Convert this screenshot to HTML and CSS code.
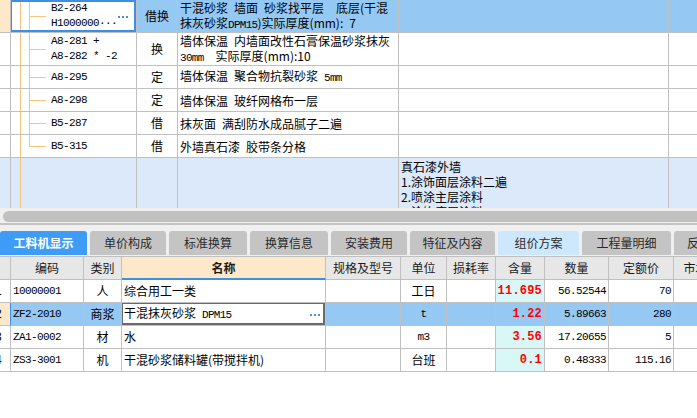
FILE: index.html
```html
<!DOCTYPE html>
<html lang="zh">
<head>
<meta charset="utf-8">
<title>工料机显示</title>
<link rel="stylesheet" href="styles.css">
</head>
<body>
<div class="app">
  <div class="top">
    <div class="tgrid">
      <div class="row sel">
        <div class="c rh-sel"></div>
        <div class="c tree cur">
          <div class="code two">B2-264<br>H1000000···</div>
          <svg class="dots dots-top" width="10" height="2" viewBox="0 0 10 2"><rect x="0" y="0" width="2" height="2"/><rect x="4" y="0" width="2" height="2"/><rect x="8" y="0" width="2" height="2"/></svg>
        </div>
        <div class="c ctr">借换</div>
        <div class="c txt"><div>干混砂浆&ensp;墙面&ensp;砂浆找平层&ensp;&ensp;底层(干混<br>抹灰砂浆<span class="mono">DPM15</span>)实际厚度(mm):&ensp;7</div></div>
        <div class="c"></div>
        <div class="c"></div>
      </div>
      <div class="row">
        <div class="c"></div>
        <div class="c tree"><div class="code two">A8-281 +<br>A8-282 * -2</div></div>
        <div class="c ctr">换</div>
        <div class="c txt"><div>墙体保温&ensp;内墙面改性石膏保温砂浆抹灰<br><span class="mono">30mm</span>&ensp;&ensp;实际厚度(mm):10</div></div>
        <div class="c"></div>
        <div class="c"></div>
      </div>
      <div class="row">
        <div class="c"></div>
        <div class="c tree"><div class="code">A8-295</div></div>
        <div class="c ctr">定</div>
        <div class="c txt"><div>墙体保温&ensp;聚合物抗裂砂浆&ensp;<span class="mono">5mm</span></div></div>
        <div class="c"></div>
        <div class="c"></div>
      </div>
      <div class="row">
        <div class="c"></div>
        <div class="c tree"><div class="code">A8-298</div></div>
        <div class="c ctr">定</div>
        <div class="c txt"><div>墙体保温&ensp;玻纤网格布一层</div></div>
        <div class="c"></div>
        <div class="c"></div>
      </div>
      <div class="row">
        <div class="c"></div>
        <div class="c tree"><div class="code">B5-287</div></div>
        <div class="c ctr">借</div>
        <div class="c txt"><div>抹灰面&ensp;满刮防水成品腻子二遍</div></div>
        <div class="c"></div>
        <div class="c"></div>
      </div>
      <div class="row">
        <div class="c"></div>
        <div class="c tree last"><div class="code">B5-315</div></div>
        <div class="c ctr">借</div>
        <div class="c txt"><div>外墙真石漆&ensp;胶带条分格</div></div>
        <div class="c"></div>
        <div class="c"></div>
      </div>
      <div class="row hint">
        <div class="c plain"></div>
        <div class="c trunk"></div>
        <div class="c"></div>
        <div class="c"></div>
        <div class="c txt desc"><div>真石漆外墙<br>1.涂饰面层涂料二遍<br>2.喷涂主层涂料<br>3.涂饰底层涂料</div></div>
        <div class="c"></div>
      </div>
    </div>
  </div>

  <div class="hscroll"><div class="thumb"></div></div>
  <div class="splitter"></div>

  <div class="tabs">
    <div class="tab active w87">工料机显示</div>
    <div class="tab w76">单价构成</div>
    <div class="tab w78">标准换算</div>
    <div class="tab w78">换算信息</div>
    <div class="tab w76">安装费用</div>
    <div class="tab w85">特征及内容</div>
    <div class="tab alt w81">组价方案</div>
    <div class="tab w89">工程量明细</div>
    <div class="tab w60">反查图形工程量</div>
  </div>

  <div class="bottom">
    <div class="bgrid">
      <div class="row head">
        <div class="c"></div>
        <div class="c ctr">编码</div>
        <div class="c ctr">类别</div>
        <div class="c ctr name-head">名称</div>
        <div class="c ctr">规格及型号</div>
        <div class="c ctr">单位</div>
        <div class="c ctr">损耗率</div>
        <div class="c ctr">含量</div>
        <div class="c ctr">数量</div>
        <div class="c ctr">定额价</div>
        <div class="c ctr">市场价</div>
      </div>
      <div class="row">
        <div class="c rn"><span>1</span></div>
        <div class="c code pl">10000001</div>
        <div class="c ctr">人</div>
        <div class="c pl">综合用工一类</div>
        <div class="c"></div>
        <div class="c ctr">工日</div>
        <div class="c"></div>
        <div class="c qty">11.695</div>
        <div class="c num">56.52544</div>
        <div class="c num">70</div>
        <div class="c"></div>
      </div>
      <div class="row sel">
        <div class="c rn rn-sel"><span>2</span></div>
        <div class="c code pl">ZF2-2010</div>
        <div class="c ctr">商浆</div>
        <div class="c pl edit"><span>干混抹灰砂浆&ensp;<span class="mono">DPM15</span></span>
          <svg class="dots dots-edit" width="10" height="2" viewBox="0 0 10 2"><rect x="0" y="0" width="2" height="2"/><rect x="4" y="0" width="2" height="2"/><rect x="8" y="0" width="2" height="2"/></svg>
        </div>
        <div class="c"></div>
        <div class="c ctr code">t</div>
        <div class="c"></div>
        <div class="c qty">1.22</div>
        <div class="c num">5.89663</div>
        <div class="c num">280</div>
        <div class="c"></div>
      </div>
      <div class="row">
        <div class="c rn"><span>3</span></div>
        <div class="c code pl">ZA1-0002</div>
        <div class="c ctr">材</div>
        <div class="c pl">水</div>
        <div class="c"></div>
        <div class="c ctr code">m3</div>
        <div class="c"></div>
        <div class="c qty">3.56</div>
        <div class="c num">17.20655</div>
        <div class="c num">5</div>
        <div class="c"></div>
      </div>
      <div class="row">
        <div class="c rn"><span>4</span></div>
        <div class="c code pl">ZS3-3001</div>
        <div class="c ctr">机</div>
        <div class="c pl">干混砂浆储料罐(带搅拌机)</div>
        <div class="c"></div>
        <div class="c ctr">台班</div>
        <div class="c"></div>
        <div class="c qty">0.1</div>
        <div class="c num">0.48333</div>
        <div class="c num">115.16</div>
        <div class="c"></div>
      </div>
    </div>
  </div>
</div>
</body>
</html>
```

FILE: styles.css
```css
* { box-sizing: border-box; }
html, body { margin: 0; padding: 0; background: #fff; }
body {
  font-family: "Noto Sans CJK SC", "Noto Sans", sans-serif;
  font-size: 12px;
  color: #000;
}
.app { width: 697px; height: 418px; overflow: hidden; background: #fff; }

/* ---------- shared cells ---------- */
.row { display: contents; }
.c {
  border-right: 1px solid #c0c0c0;
  border-bottom: 1px solid #c0c0c0;
  display: flex;
  align-items: center;
  white-space: nowrap;
  overflow: hidden;
  position: relative;
  line-height: 14px;
}
.ctr { justify-content: center; }
.txt { padding-left: 2px; line-height: 15px; }
.pl { padding-left: 2px; }
.code {
  font-family: "Liberation Mono", monospace;
  font-size: 11px;
  letter-spacing: -0.6px;
}
.mono {
  font-family: "Liberation Mono", monospace;
  font-size: 11px;
  letter-spacing: -0.7px;
}
.two { line-height: 15px; }

/* ---------- top grid ---------- */
.top { height: 208px; overflow: hidden; }
.tgrid {
  display: grid;
  grid-template-columns: 11px 126px 41px 221px 270px 40px;
  grid-template-rows: 33px 33px 23px 23px 23px 23px 64px;
  width: 711px;
}
.tgrid .row.sel > .c { background-color: #95c9f4; }
.tgrid .row.sel > .c.rh-sel { background-color: #fde8ca; }
.tgrid .row.hint > .c { background-color: #dce9fb; }

.tree {
  padding-left: 40px;
  background-image:
    linear-gradient(#f8c57c, #f8c57c),
    linear-gradient(#f8c57c, #f8c57c),
    linear-gradient(#f8c57c, #f8c57c);
  background-repeat: no-repeat;
  background-size: 1px 100%, 1px 100%, 17px 1px;
  background-position: 9px 0, 18px 0, 18px 50%;
}
.tree.last { background-size: 1px 100%, 1px 50%, 17px 1px; }
.tgrid .row.sel > .c.cur { background-color: #fff; }
.cur::after {
  content: "";
  position: absolute;
  top: 0; bottom: 0; right: 0; left: -1px;
  border: 2px solid #3d8fe6;
}
.trunk {
  background-image: linear-gradient(#f8c57c, #f8c57c);
  background-repeat: no-repeat;
  background-size: 1px 100%;
  background-position: 9px 0;
}
.desc { align-items: flex-start; padding-top: 1px; line-height: 15px; }

.dots { fill: #4a90d9; flex: none; }
.dots-top { margin-left: auto; margin-right: 8px; margin-top: 1px; }

/* ---------- scrollbar & splitter ---------- */
.hscroll {
  height: 14px;
  background: #f0f0f0;
  padding: 3px 0 0 3px;
}
.thumb {
  height: 11px;
  width: 720px;
  background: #c1c1c1;
  border-radius: 6px;
}
.splitter {
  height: 9px;
  background: linear-gradient(#f0f0f0 0 1px, #c4c4c4 1px 3px, #f0f0f0 3px 100%);
}

/* ---------- tabs ---------- */
.tabs {
  display: flex;
  gap: 3px;
  height: 25px;
  background: #f0f0f0;
  align-items: flex-start;
  overflow: hidden;
}
.tab {
  flex: none;
  height: 24px;
  line-height: 24px;
  text-align: center;
  background: #c4c4c4;
  color: #2a2a2a;
  border-radius: 3px 3px 0 0;
  white-space: nowrap;
  overflow: hidden;
}
.tab.active { background: #3f9cf6; color: #fff; font-weight: bold; }
.tab.alt { background: #cde7fc; }
.w60 { width: 60px; text-align: left; padding-left: 13px; }
.w76 { width: 76px; }
.w78 { width: 78px; }
.w81 { width: 81px; }
.w85 { width: 85px; }
.w87 { width: 87px; }
.w89 { width: 89px; }

/* ---------- bottom grid ---------- */
.bottom { overflow: hidden; width: 697px; }
.bgrid {
  display: grid;
  grid-template-columns: 11px 73px 38px 204px 75px 46px 49px 49px 64px 65px 56px;
  grid-auto-rows: 23px;
  width: 730px;
  border-top: 1px solid #c0c0c0;
}
.bgrid .row.head > .c { background: #e7e7e7; color: #1a1a1a; }
.bgrid .row.head > .c.name-head {
  background: #fde8ca;
  font-weight: bold;
  border-bottom: 2px solid #3d8fe6;
}
.bgrid .row.sel > .c { background: #95c9f4; }
.bgrid .row.sel > .c.rn-sel { background: #fde8ca; border-right-color: #3d8fe6; }
.bgrid .row.sel > .c.edit { background: #fff; }
.edit::after {
  content: "";
  position: absolute;
  top: -1px; left: -1px; right: 0; bottom: 0;
  border: 2px solid #6b6b6b;
}
.dots-edit { margin-left: auto; margin-right: 5px; margin-top: 1px; }

.rn { font-family: "Liberation Sans", sans-serif; font-size: 12px; }
.rn span { margin-left: -5px; }

.qty {
  background: #d9f7f7;
  justify-content: flex-end;
  padding-right: 2px;
  color: #ff0000;
  font-weight: bold;
  font-family: "Liberation Mono", monospace;
  font-size: 12px;
  letter-spacing: 0.2px;
}
.num {
  justify-content: flex-end;
  padding-right: 2px;
  font-family: "Liberation Mono", monospace;
  font-size: 11px;
  letter-spacing: -0.6px;
}
```
